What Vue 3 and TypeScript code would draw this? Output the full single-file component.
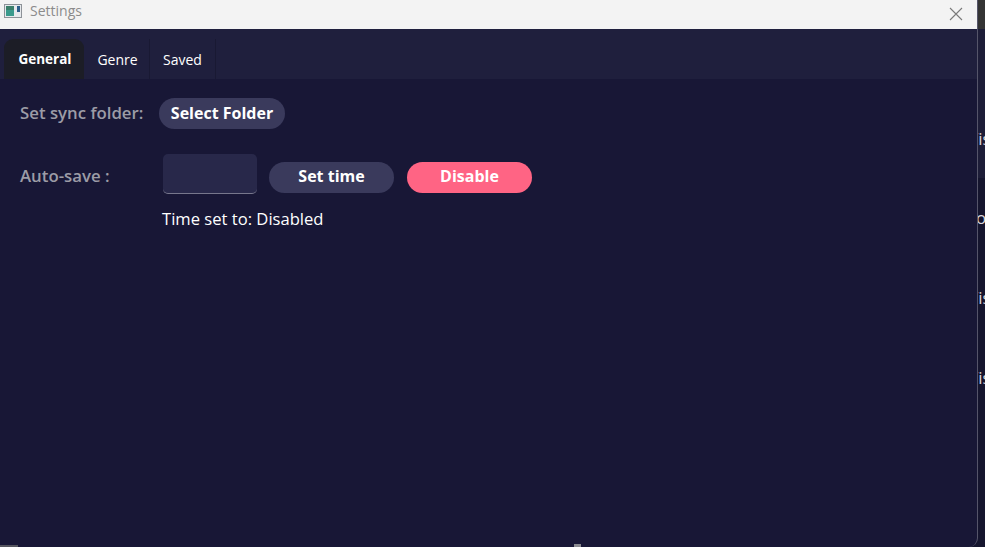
<script setup lang="ts">
const tabs: string[] = ['General', 'Genre', 'Saved']
const peeks: { text: string; cls: string }[] = [
  { text: 'Vis', cls: 'p1' },
  { text: 'o', cls: 'p2' },
  { text: 'Vis', cls: 'p3' },
  { text: 'Vis', cls: 'p4' },
]
</script>

<template>
  <div class="screen">
    <div class="window">
      <header class="titlebar">
        <svg class="appicon" width="18" height="16" viewBox="0 0 18 16">
          <rect x="0.5" y="1.5" width="17" height="13" fill="#e6e9ec" stroke="#8d9298" />
          <rect x="2" y="3" width="8" height="10" fill="#3a9a8c" />
          <rect x="2" y="3" width="8" height="4" fill="#3a7f6a" />
          <rect x="13" y="3" width="3" height="6" fill="#2d5f8a" />
        </svg>
        <span class="title">Settings</span>
        <svg class="close" width="14" height="14" viewBox="0 0 14 14">
          <path d="M1 1 L13 13 M13 1 L1 13" stroke="#7a7a7a" stroke-width="1.1" fill="none" />
        </svg>
      </header>
      <nav class="tabbar">
        <div v-for="(tab, i) in tabs" :key="tab" class="tab" :class="{ active: i === 0 }">{{ tab }}</div>
      </nav>
      <main class="content">
        <div class="row sync">
          <span class="label sync-label">Set sync folder:</span>
          <button class="btn folder">Select Folder</button>
        </div>
        <div class="row auto">
          <span class="label auto-label">Auto-save :</span>
          <div class="input"></div>
          <button class="btn settime">Set time</button>
          <button class="btn disable">Disable</button>
        </div>
        <p class="status">Time set to: Disabled</p>
      </main>
    </div>
    <aside class="behind">
      <div class="behind-top"></div>
      <div class="behind-list">
        <span v-for="(p, i) in peeks" :key="i" class="peek" :class="p.cls">{{ p.text }}</span>
      </div>
    </aside>
    <i class="edge edge-left"></i>
    <i class="edge edge-mid"></i>
  </div>
</template>

<style scoped>
.screen {
  position: relative;
  display: flex;
  width: 985px;
  height: 547px;
  overflow: hidden;
  background: #15152e;
  font-family: "Open Sans", "Noto Sans", sans-serif;
}
.window {
  width: 978px;
  height: 547px;
  flex: none;
  display: flex;
  flex-direction: column;
  background: #181736;
  border-right: 1px solid #55556a;
  border-bottom-right-radius: 9px;
  box-sizing: border-box;
  overflow: hidden;
}
.titlebar {
  height: 29px;
  flex: none;
  display: flex;
  align-items: center;
  background: #f3f3f3;
  padding: 0 14px 8px 4px;
  box-sizing: border-box;
}
.appicon { flex: none; }
.title {
  margin-left: 8px;
  font-size: 14px;
  color: #8b8b8b;
}
.close { margin-left: auto; margin-top: 6px; }
.tabbar {
  height: 50px;
  flex: none;
  display: flex;
  align-items: flex-end;
  background: #1f1f3d;
  padding-left: 4px;
  box-sizing: border-box;
}
.tab {
  height: 40px;
  display: flex;
  align-items: center;
  justify-content: center;
  color: #fff;
  font-size: 14px;
  box-sizing: border-box;
}
.tab:nth-child(1) { width: 80px; }
.tab:nth-child(2) { width: 66px; border-right: 1px solid #191933; padding-left: 2px; }
.tab:nth-child(3) { width: 66px; border-right: 1px solid #191933; }
.tab.active {
  background: #1c1d26;
  border-radius: 9px 9px 0 0;
  font-size: 13.5px;
  font-weight: 700;
  padding-left: 2px;
}
.content {
  flex: 1;
  padding: 19px 0 0 20px;
  box-sizing: border-box;
}
.row {
  display: flex;
  align-items: center;
}
.sync { height: 31px; }
.auto { height: 40px; margin-top: 25px; }
.label {
  color: #9c9ca6;
  font-size: 16.8px;
  font-weight: 600;
  line-height: 22px;
  flex: none;
}
.sync-label { width: 139px; position: relative; top: -1px; }
.auto-label { width: 143px; position: relative; top: 2px; }
.btn {
  height: 31px;
  border: none;
  border-radius: 16px;
  color: #fff;
  font-family: inherit;
  font-size: 16px;
  font-weight: 700;
  line-height: 22px;
  padding: 0 0 2px;
  flex: none;
  box-sizing: border-box;
}
.folder { width: 126px; background: #3a3a5c; }
.input {
  width: 94px;
  height: 40px;
  background: #28284a;
  border-radius: 5px;
  border-bottom: 1px solid #77778c;
  box-sizing: border-box;
  flex: none;
}
.settime {
  width: 125px;
  background: #3a3a5c;
  margin-left: 12px;
  position: relative;
  top: 3px;
}
.disable {
  width: 125px;
  background: #ff6484;
  margin-left: 13px;
  position: relative;
  top: 3px;
}
.status {
  margin: 13px 0 0 142px;
  font-size: 16.6px;
  line-height: 24px;
  color: #fff;
}
.behind {
  flex: 1;
  display: flex;
  flex-direction: column;
  overflow: hidden;
  color: #d8d8de;
  font-size: 17px;
  line-height: 20px;
}
.behind-top {
  height: 29px;
  flex: none;
  background: #343434;
}
.behind-list {
  flex: 1;
  display: flex;
  flex-direction: column;
  padding-top: 100px;
  background: linear-gradient(#1d1d38 0 149px, #15152e 149px);
}
.peek { display: block; margin-left: -10px; white-space: nowrap; height: 20px; }
.p2 { margin-top: 59px; margin-left: -2px; }
.p3 { margin-top: 60px; }
.p4 { margin-top: 60px; }
.edge {
  position: absolute;
  bottom: 0;
  height: 2px;
  background: #55555f;
}
.edge-left { left: 0; width: 18px; }
.edge-mid { left: 574px; width: 7px; height: 3px; background: #8a8a90; }
</style>
